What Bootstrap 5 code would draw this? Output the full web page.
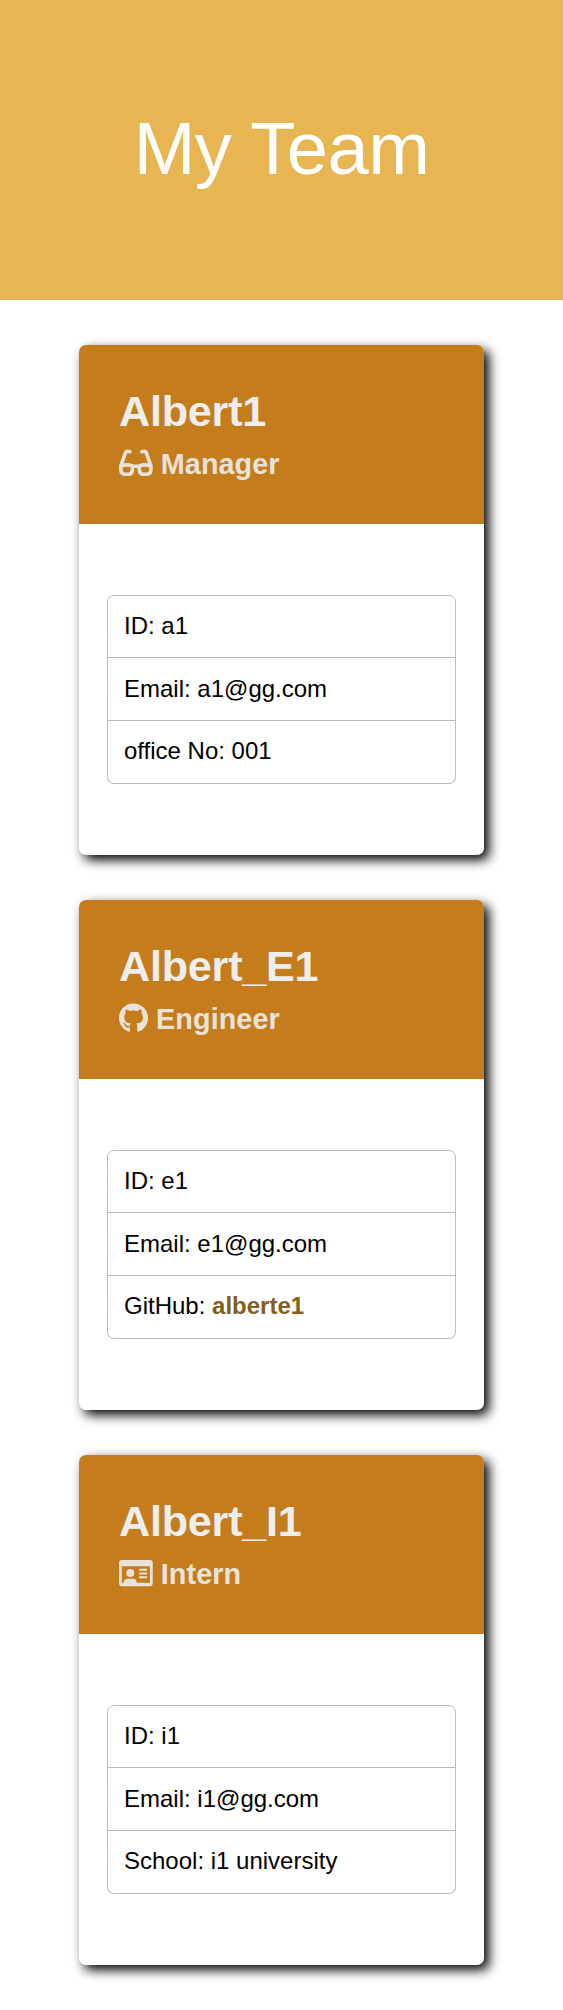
<!DOCTYPE html>
<html lang="en">
<head>
<meta charset="utf-8">
<meta name="viewport" content="width=device-width, initial-scale=1">
<title>My Team</title>
<link rel="stylesheet" href="https://cdn.jsdelivr.net/npm/bootstrap@5.3.0/dist/css/bootstrap.min.css">
<style>
  body { font-family: "Liberation Sans", Arial, sans-serif; font-size: 24px; line-height: 1.5; color: #000; background: #fff; }
  .hero { height: 300px; background: #e7b552; color: #fff; }
  .hero h1 { font-size: 74px; line-height: 1.2; font-weight: 400; letter-spacing: -.45px; padding-bottom: 2px; }
  .team { gap: 45px; padding: 45px 0 45px; }
  .member { width: 405px; height: 510px; border: 0; border-radius: 7px; box-shadow: 5px 5px 12px #000; }
  .member-head { height: 179px; padding: 40px 40px 0; background: #c57c1c; color: #eee; border: 0; border-radius: 7px 7px 0 0 !important; }
  .member-head h2 { font-size: 43.2px; line-height: 52px; font-weight: 700; letter-spacing: -.25px; }
  .member-head h3 { font-size: 28.8px; line-height: 35px; font-weight: 700; opacity: .9; margin-top: 10px; letter-spacing: .05px; }
  .role-icon { height: 30px; fill: currentColor; vertical-align: -4px; }
  .member-body { padding: 71px 28px 0; }
  .facts { --bs-list-group-border-color: #bbb; --bs-list-group-color: #000; --bs-list-group-border-radius: 7px; --bs-list-group-bg: #fff; }
  .facts .list-group-item { height: 62.7px; padding: 12px 16px; }
  .facts .list-group-item:first-child { height: 63.3px; }
  .facts .list-group-item:nth-child(2) { padding-top: 13px; }
  .facts a { color: #80601a; font-weight: 700; text-decoration: none; }
</style>
</head>
<body>
<header class="hero d-flex align-items-center justify-content-center">
  <h1 class="m-0">My Team</h1>
</header>
<main class="team d-flex flex-column align-items-center">
  <section class="card member">
    <div class="card-header member-head">
      <h2 class="mb-0">Albert1</h2>
      <h3 class="mb-0"><svg class="role-icon" viewBox="0 0 576 512" aria-hidden="true"><g fill="none" stroke="currentColor" stroke-width="62" stroke-linecap="round" stroke-linejoin="round"><path d="M186 65l-20-5c-34-9-54 8-62 38L34 300M390 65l20-5c34-9 54 8 62 38l70 202"/><path d="M32 306c64-24 138-24 200 0l-5 78c-4 42-29 64-66 64h-55c-43 0-74-28-74-70zM544 306c-64-24-138-24-200 0l5 78c4 42 29 64 66 64h55c43 0 74-28 74-70zM234 312h108"/></g></svg> Manager</h3>
    </div>
    <div class="card-body member-body">
      <ul class="list-group facts">
        <li class="list-group-item">ID: a1</li>
        <li class="list-group-item">Email: a1@gg.com</li>
        <li class="list-group-item">office No: 001</li>
      </ul>
    </div>
  </section>
  <section class="card member">
    <div class="card-header member-head">
      <h2 class="mb-0">Albert_E1</h2>
      <h3 class="mb-0"><svg class="role-icon" viewBox="0 0 496 512" aria-hidden="true"><path d="M165.9 397.4c0 2-2.3 3.6-5.2 3.6-3.3.3-5.6-1.3-5.6-3.6 0-2 2.3-3.6 5.2-3.6 3-.3 5.6 1.3 5.6 3.6zm-31.1-4.5c-.7 2 1.3 4.3 4.3 4.9 2.6 1 5.6 0 6.2-2s-1.3-4.3-4.3-5.2c-2.6-.7-5.5.3-6.2 2.3zm44.2-1.7c-2.9.7-4.9 2.6-4.6 4.9.3 2 2.9 3.3 5.9 2.6 2.9-.7 4.9-2.6 4.6-4.6-.3-1.9-3-3.2-5.9-2.9zM244.8 8C106.1 8 0 113.3 0 252c0 110.9 69.8 205.8 169.5 239.2 12.8 2.3 17.3-5.6 17.3-12.1 0-6.2-.3-40.4-.3-61.4 0 0-70 15-84.7-29.8 0 0-11.4-29.1-27.8-36.6 0 0-22.9-15.7 1.6-15.4 0 0 24.9 2 38.6 25.8 21.9 38.6 58.6 27.5 72.9 20.9 2.3-16 8.8-27.1 16-33.7-55.9-6.2-112.3-14.3-112.3-110.5 0-27.5 7.6-41.3 23.6-58.9-2.6-6.5-11.1-33.3 2.6-67.9 20.9-6.5 69 27 69 27 20-5.6 41.5-8.5 62.8-8.5s42.8 2.9 62.8 8.5c0 0 48.1-33.6 69-27 13.7 34.7 5.2 61.4 2.6 67.9 16 17.7 25.8 31.5 25.8 58.9 0 96.5-58.9 104.2-114.8 110.5 9.2 7.9 17 22.9 17 46.4 0 33.7-.3 75.4-.3 83.6 0 6.5 4.6 14.4 17.3 12.1C428.2 457.8 496 362.9 496 252 496 113.3 383.5 8 244.8 8z"/></svg> Engineer</h3>
    </div>
    <div class="card-body member-body">
      <ul class="list-group facts">
        <li class="list-group-item">ID: e1</li>
        <li class="list-group-item">Email: e1@gg.com</li>
        <li class="list-group-item">GitHub: <a href="#">alberte1</a></li>
      </ul>
    </div>
  </section>
  <section class="card member">
    <div class="card-header member-head">
      <h2 class="mb-0">Albert_I1</h2>
      <h3 class="mb-0"><svg class="role-icon" viewBox="0 0 576 512" aria-hidden="true"><path fill-rule="evenodd" d="M48 32h480a48 48 0 0 1 48 48v352a48 48 0 0 1-48 48H48a48 48 0 0 1-48-48V80a48 48 0 0 1 48-48zM48 140v284h32c0-45 28-72 68-72h88c40 0 68 27 68 72h224V140z"/><circle cx="192" cy="256" r="68"/><path d="M344 184h136v34H344zM344 248h136v34H344zM344 312h136v34H344z"/></svg> Intern</h3>
    </div>
    <div class="card-body member-body">
      <ul class="list-group facts">
        <li class="list-group-item">ID: i1</li>
        <li class="list-group-item">Email: i1@gg.com</li>
        <li class="list-group-item">School: i1 university</li>
      </ul>
    </div>
  </section>
</main>
<script src="https://cdn.jsdelivr.net/npm/bootstrap@5.3.0/dist/js/bootstrap.bundle.min.js"></script>
</body>
</html>
